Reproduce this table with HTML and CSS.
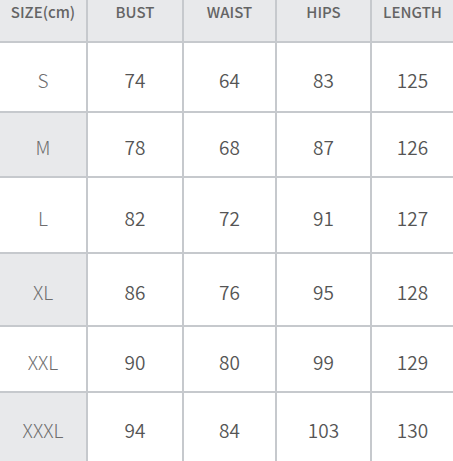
FILE: index.html
```html
<!DOCTYPE html>
<html>
<head>
<meta charset="utf-8">
<link rel="stylesheet" href="styles.css">
</head>
<body>
<div class="chart">
  <div class="cell head">SIZE(cm)</div>
  <div class="cell head">BUST</div>
  <div class="cell head">WAIST</div>
  <div class="cell head">HIPS</div>
  <div class="cell head">LENGTH</div>

  <div class="cell size">S</div>
  <div class="cell">74</div>
  <div class="cell">64</div>
  <div class="cell">83</div>
  <div class="cell">125</div>

  <div class="cell size alt">M</div>
  <div class="cell">78</div>
  <div class="cell">68</div>
  <div class="cell">87</div>
  <div class="cell">126</div>

  <div class="cell size">L</div>
  <div class="cell">82</div>
  <div class="cell">72</div>
  <div class="cell">91</div>
  <div class="cell">127</div>

  <div class="cell size alt">XL</div>
  <div class="cell">86</div>
  <div class="cell">76</div>
  <div class="cell">95</div>
  <div class="cell">128</div>

  <div class="cell size">XXL</div>
  <div class="cell">90</div>
  <div class="cell">80</div>
  <div class="cell">99</div>
  <div class="cell">129</div>

  <div class="cell size alt">XXXL</div>
  <div class="cell">94</div>
  <div class="cell">84</div>
  <div class="cell">103</div>
  <div class="cell">130</div>
</div>
</body>
</html>
```
FILE: styles.css
```css
html, body {
  margin: 0;
  padding: 0;
  background: #ffffff;
}
.chart {
  width: 453px;
  height: 461px;
  overflow: hidden;
  display: grid;
  grid-template-columns: 86px 94px 91px 93px 1fr;
  grid-template-rows: 41px 68px 63px 74px 71px 64px 68px;
  gap: 2px;
  background: #c6c9cd;
  font-family: "Noto Sans CJK SC", "Noto Sans", sans-serif;
}
.cell {
  background: #ffffff;
  display: flex;
  align-items: center;
  justify-content: center;
  padding-top: 4px;
  box-sizing: border-box;
  font-size: 19px;
  font-weight: 350;
  color: #555555;
}
.head {
  background: #e8e9eb;
  align-items: flex-start;
  padding-top: 1px;
  font-size: 15px;
  font-weight: 500;
  color: #646464;
}
.size {
  font-weight: 300;
  color: #6e6e6e;
}
.alt {
  background: #e8e9eb;
}
```
